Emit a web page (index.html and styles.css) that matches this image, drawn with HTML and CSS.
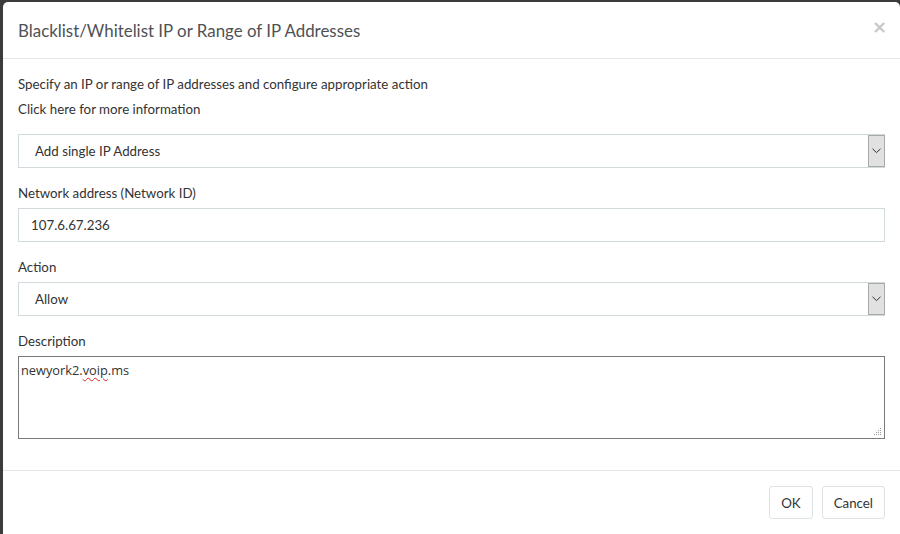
FILE: index.html
```html
<!DOCTYPE html>
<html>
<head>
<meta charset="utf-8">
<link rel="stylesheet" href="styles.css">
</head>
<body>
<div class="modal">
  <div class="modal-header">
    <h4 class="modal-title">Blacklist/Whitelist IP or Range of IP Addresses</h4>
    <span class="close">×</span>
  </div>
  <div class="modal-body">
    <p class="intro">Specify an IP or range of IP addresses and configure appropriate action</p>
    <p class="intro">Click here for more information</p>
    <div class="form-group">
      <div class="select">
        <span class="select-text">Add single IP Address</span>
        <span class="select-btn"><svg width="9" height="6" viewBox="0 0 9 6"><path d="M0.5 0.8 L4.5 4.6 L8.5 0.8" fill="none" stroke="#333" stroke-width="1"/></svg></span>
      </div>
    </div>
    <div class="form-group">
      <label class="label">Network address (Network ID)</label>
      <div class="input">107.6.67.236</div>
    </div>
    <div class="form-group">
      <label class="label">Action</label>
      <div class="select">
        <span class="select-text">Allow</span>
        <span class="select-btn"><svg width="9" height="6" viewBox="0 0 9 6"><path d="M0.5 0.8 L4.5 4.6 L8.5 0.8" fill="none" stroke="#333" stroke-width="1"/></svg></span>
      </div>
    </div>
    <div class="form-group last">
      <label class="label">Description</label>
      <div class="textarea">newyork2.<span class="spell">voip</span>.ms
        <svg class="grip" width="8" height="8" viewBox="0 0 8 8"><g fill="#999"><rect x="6" y="0" width="1" height="1"/><rect x="4" y="2" width="1" height="1"/><rect x="6" y="2" width="1" height="1"/><rect x="2" y="4" width="1" height="1"/><rect x="4" y="4" width="1" height="1"/><rect x="6" y="4" width="1" height="1"/><rect x="0" y="6" width="1" height="1"/><rect x="2" y="6" width="1" height="1"/><rect x="4" y="6" width="1" height="1"/><rect x="6" y="6" width="1" height="1"/></g></svg>
      </div>
    </div>
  </div>
  <div class="modal-footer">
    <button class="btn">OK</button>
    <button class="btn">Cancel</button>
  </div>
</div>
</body>
</html>
```
FILE: styles.css
```css
html, body {
  margin: 0;
  padding: 0;
  height: 100%;
  overflow: hidden;
}
body {
  background: #3b3b3b;
  font-family: Lato, "Open Sans", sans-serif;
  font-size: 13.3px;
  color: #333;
}
.modal {
  margin: 2px 0 0 3px;
  width: 897px;
  height: 532px;
  overflow: hidden;
  background: #fff;
  border-radius: 5px 5px 0 0;
}
.modal-header {
  height: 57px;
  box-sizing: border-box;
  padding: 0 15px;
  border-bottom: 1px solid #e5e5e5;
  display: flex;
  align-items: center;
  justify-content: space-between;
}
.modal-title {
  margin: 0;
  font-size: 16.9px;
  font-weight: 400;
  color: #4f5155;
}
.close {
  font-size: 18px;
  color: #c8c8c8;
  font-weight: 700;
  margin-right: -2px;
  margin-top: -8px;
  font-family: "DejaVu Sans", sans-serif;
}
.modal-body {
  padding: 15px 15px 15px;
}
.intro {
  margin: 0 0 5px;
  line-height: 20px;
}
.intro + .intro {
  margin-bottom: 15px;
}
.form-group {
  margin-bottom: 15px;
}
.form-group.last {
  margin-bottom: 16px;
}
.label {
  display: block;
  line-height: 20px;
  margin-bottom: 5px;
}
.select {
  height: 34px;
  box-sizing: border-box;
  border: 1px solid #d3dadd;
  display: flex;
  align-items: center;
  justify-content: space-between;
}
.select-text {
  padding-left: 16px;
}
.select-btn {
  width: 17px;
  height: 32px;
  box-sizing: border-box;
  background: #e1e1e1;
  border: 1px solid #a9a9a9;
  display: flex;
  align-items: center;
  justify-content: center;
  margin-right: -1px;
}
.input {
  height: 34px;
  box-sizing: border-box;
  border: 1px solid #d3dadd;
  display: flex;
  align-items: center;
  padding-left: 12px;
}
.textarea {
  position: relative;
  height: 83px;
  box-sizing: border-box;
  border: 1px solid #7a7a7a;
  padding: 4px 2px;
  font-family: "Open Sans", sans-serif;
  font-size: 12.8px;
  color: #333;
}
.spell {
  text-decoration: underline wavy #e02020;
  text-decoration-thickness: 1px;
  text-underline-offset: 2px;
}
.grip {
  position: absolute;
  right: 2px;
  bottom: 2px;
}
.modal-footer {
  border-top: 1px solid #e5e5e5;
  padding: 15px 15px;
  display: flex;
  justify-content: flex-end;
  gap: 9px;
}
.btn {
  font-family: Lato, "Open Sans", sans-serif;
  font-size: 13.3px;
  color: #333;
  background: #fff;
  border: 1px solid #dde2e4;
  border-radius: 3px;
  height: 33px;
  padding: 0 11px;
}
```
